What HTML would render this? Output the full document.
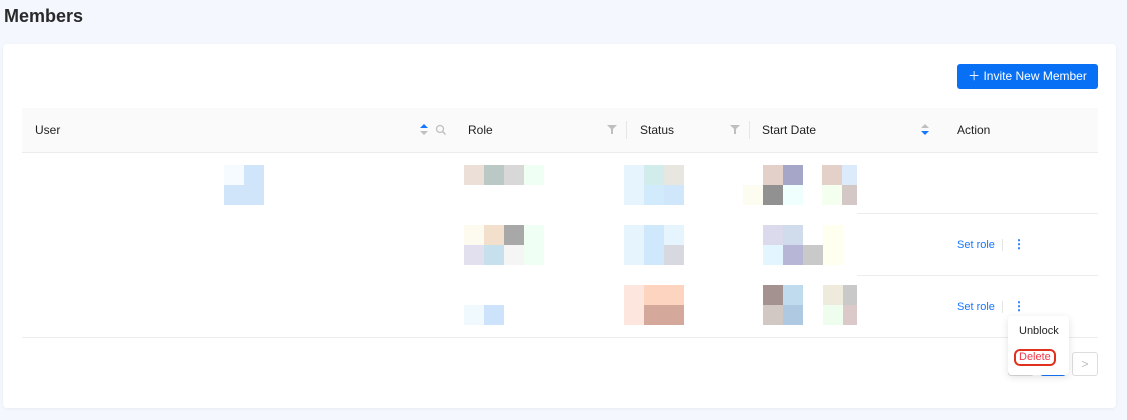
<!DOCTYPE html><html><head><style>
body{margin:0;width:1127px;height:420px;background:#f4f7fe;font-family:"Liberation Sans",sans-serif;position:relative;overflow:hidden}
.a{position:absolute}
.p{position:absolute;width:20px;height:20px}
.t{font-size:12px;color:#1f1f1f;top:123px}
</style></head><body>
<div class="a" style="left:4px;top:6px;font-size:18px;font-weight:bold;color:#2a2a2a">Members</div>
<div class="a" style="left:3px;top:44px;width:1113px;height:364px;background:#fff;border-radius:4px;box-shadow:0 1px 3px rgba(0,0,0,.05)"></div>
<div class="a" style="left:957px;top:64px;width:141px;height:25px;background:#0870f4;border-radius:3px;color:#fff;font-size:12px;line-height:25px;text-align:center">＋ Invite New Member</div>
<div class="a" style="left:22px;top:108px;width:1076px;height:44px;background:#fafafa;border-bottom:1px solid #ececec"></div>
<div class="a t" style="left:35px">User</div>
<div class="a t" style="left:468px">Role</div>
<div class="a t" style="left:640px">Status</div>
<div class="a t" style="left:762px">Start Date</div>
<div class="a t" style="left:957px">Action</div>
<svg class="a" style="left:420px;top:124px" width="8" height="12"><path d="M4 0L8 4H0Z" fill="#1677ff"/><path d="M4 11L8 7H0Z" fill="#bfbfbf"/></svg>
<svg class="a" style="left:435px;top:124px" width="12" height="12"><circle cx="5" cy="5" r="3.5" fill="none" stroke="#bfbfbf" stroke-width="1.3"/><path d="M7.5 7.5L10.5 10.5" stroke="#bfbfbf" stroke-width="1.5"/></svg>
<svg class="a" style="left:921px;top:124px" width="8" height="12"><path d="M4 0L8 4H0Z" fill="#bfbfbf"/><path d="M4 11L8 7H0Z" fill="#1677ff"/></svg>
<svg class="a" style="left:607px;top:125px" width="10" height="9"><path d="M0 0H10L6 4V9H4V4Z" fill="#bfbfbf"/></svg>
<svg class="a" style="left:730px;top:125px" width="10" height="9"><path d="M0 0H10L6 4V9H4V4Z" fill="#bfbfbf"/></svg>
<div class="a" style="left:626px;top:121px;width:1px;height:18px;background:#e6e6e6"></div>
<div class="a" style="left:749px;top:121px;width:1px;height:18px;background:#e6e6e6"></div>
<div class="a" style="left:857px;top:213px;width:241px;height:1px;background:#ececec"></div>
<div class="a" style="left:857px;top:275px;width:241px;height:1px;background:#ececec"></div>
<div class="a" style="left:22px;top:337px;width:1076px;height:1px;background:#ececec"></div>
<div class="p" style="left:224px;top:165px;background:#f5fbff"></div><div class="p" style="left:244px;top:165px;background:#d0e5f9"></div><div class="p" style="left:224px;top:185px;background:#d0e5f9"></div><div class="p" style="left:244px;top:185px;background:#d0e5f9"></div>
<div class="p" style="left:464px;top:165px;background:#ecdfd8"></div><div class="p" style="left:484px;top:165px;background:#bac9c6"></div><div class="p" style="left:504px;top:165px;background:#d8d8d8"></div><div class="p" style="left:524px;top:165px;background:#f0fff4"></div>
<div class="p" style="left:624px;top:165px;background:#e6f4fe"></div><div class="p" style="left:644px;top:165px;background:#d2ecec"></div><div class="p" style="left:664px;top:165px;background:#e7e6e1"></div><div class="p" style="left:624px;top:185px;background:#e6f4fe"></div><div class="p" style="left:644px;top:185px;background:#d2ebfc"></div><div class="p" style="left:664px;top:185px;background:#cfe6fb"></div>
<div class="p" style="left:763px;top:165px;background:#e3d0c8"></div><div class="p" style="left:783px;top:165px;background:#a5a6c8"></div><div class="p" style="left:743px;top:185px;background:#fcfdf0"></div><div class="p" style="left:763px;top:185px;background:#919191"></div><div class="p" style="left:783px;top:185px;background:#effffe"></div><div class="p" style="left:822px;top:165px;background:#e3d0c8"></div><div class="p" style="left:842px;top:165px;width:15px;background:#dcebfb"></div><div class="p" style="left:822px;top:185px;background:#f5fff0"></div><div class="p" style="left:842px;top:185px;width:15px;background:#d3c8c6"></div>
<div class="p" style="left:464px;top:225px;background:#fdfbef"></div><div class="p" style="left:484px;top:225px;background:#f2e0cc"></div><div class="p" style="left:504px;top:225px;background:#a8a8a8"></div><div class="p" style="left:524px;top:225px;height:40px;background:#f0fff4"></div><div class="p" style="left:464px;top:245px;background:#e2e0ef"></div><div class="p" style="left:484px;top:245px;background:#c6e0ed"></div><div class="p" style="left:504px;top:245px;background:#f5f5f5"></div>
<div class="p" style="left:624px;top:225px;height:40px;background:#e6f4fe"></div><div class="p" style="left:644px;top:225px;height:40px;background:#d0e8fc"></div><div class="p" style="left:664px;top:225px;background:#e6f4fe"></div><div class="p" style="left:664px;top:245px;background:#d8d8e0"></div>
<div class="p" style="left:763px;top:225px;background:#dadaec"></div><div class="p" style="left:783px;top:225px;background:#d0dbec"></div><div class="p" style="left:823px;top:225px;height:40px;background:#fffff0"></div><div class="p" style="left:763px;top:245px;background:#e3f5fe"></div><div class="p" style="left:783px;top:245px;background:#b7b6d6"></div><div class="p" style="left:803px;top:245px;background:#c9c9c9"></div>
<div class="p" style="left:464px;top:305px;background:#f0fafe"></div><div class="p" style="left:484px;top:305px;background:#cce3fb"></div>
<div class="p" style="left:624px;top:285px;background:#fde6de"></div><div class="p" style="left:644px;top:285px;background:#fcd4c0"></div><div class="p" style="left:664px;top:285px;background:#fcd4c0"></div><div class="p" style="left:624px;top:305px;background:#fde6de"></div><div class="p" style="left:644px;top:305px;background:#d4a89a"></div><div class="p" style="left:664px;top:305px;background:#d4a89a"></div>
<div class="p" style="left:763px;top:285px;background:#a49291"></div><div class="p" style="left:783px;top:285px;background:#c0dbee"></div><div class="p" style="left:823px;top:285px;background:#eeebdc"></div><div class="p" style="left:843px;top:285px;width:14px;background:#c9c9c9"></div><div class="p" style="left:763px;top:305px;background:#d1c8c3"></div><div class="p" style="left:783px;top:305px;background:#b0c9e3"></div><div class="p" style="left:823px;top:305px;background:#effdef"></div><div class="p" style="left:843px;top:305px;width:14px;background:#dbc8c8"></div>
<div class="a" style="left:957px;top:239px;font-size:11px;color:#1677ff">Set role</div>
<div class="a" style="left:1002px;top:239px;width:1px;height:12px;background:#e6e6e6"></div>
<div class="a" style="left:1013px;top:237px;font-size:12px;color:#1677ff;font-weight:bold">⋮</div>
<div class="a" style="left:957px;top:301px;font-size:11px;color:#1677ff">Set role</div>
<div class="a" style="left:1002px;top:301px;width:1px;height:12px;background:#e6e6e6"></div>
<div class="a" style="left:1013px;top:299px;font-size:12px;color:#1677ff;font-weight:bold">⋮</div>
<div class="a" style="left:1008px;top:352px;width:24px;height:22px;border:1px solid #ddd;border-radius:3px"></div>
<div class="a" style="left:1040px;top:352px;width:24px;height:22px;border:1px solid #1677ff;border-radius:3px"></div>
<div class="a" style="left:1072px;top:352px;width:24px;height:22px;border:1px solid #ddd;border-radius:3px;color:#bbb;font-size:12px;line-height:22px;text-align:center">&gt;</div>
<div class="a" style="left:1008px;top:316px;width:61px;height:59px;background:#fff;border-radius:4px;box-shadow:0 2px 8px rgba(0,0,0,.12)"></div>
<div class="a" style="left:1019px;top:325px;font-size:11px;color:#222">Unblock</div>
<div class="a" style="left:1014px;top:349px;width:42px;height:17px;border:2px solid #e0301e;border-radius:6px;box-sizing:border-box"></div>
<div class="a" style="left:1019px;top:351px;font-size:11px;color:#f0394a">Delete</div>
</body></html>
